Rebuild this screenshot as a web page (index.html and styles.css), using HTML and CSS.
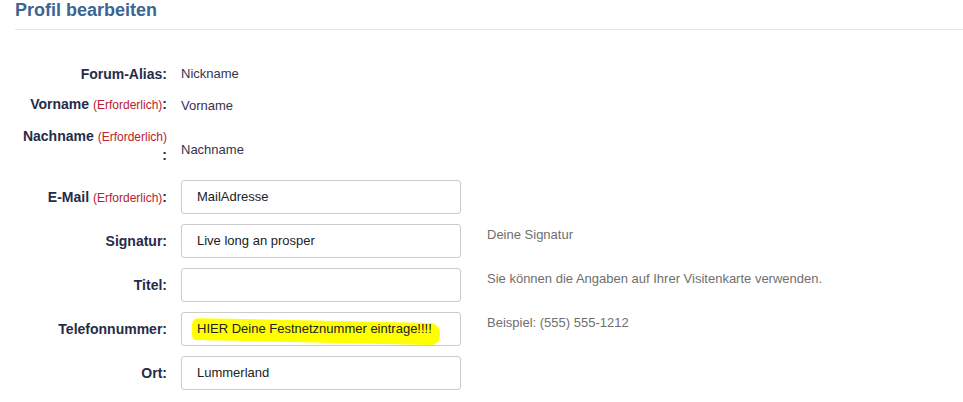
FILE: index.html
```html
<!DOCTYPE html>
<html lang="de">
<head>
<meta charset="utf-8">
<title>Profil bearbeiten</title>
<link rel="stylesheet" href="styles.css">
</head>
<body>
<div class="page">
  <h2 class="title">Profil bearbeiten</h2>
  <div class="rule"></div>
  <div class="form">
    <div class="row static r1">
      <div class="label">Forum-Alias:</div>
      <div class="value">Nickname</div>
    </div>
    <div class="row static r2">
      <div class="label">Vorname <span class="req">(Erforderlich)</span>:</div>
      <div class="value v2">Vorname</div>
    </div>
    <div class="row static r3">
      <div class="label">Nachname <span class="req">(Erforderlich)</span><br>:</div>
      <div class="value v3">Nachname</div>
    </div>
    <div class="row field">
      <div class="label">E-Mail <span class="req">(Erforderlich)</span>:</div>
      <div class="input">MailAdresse</div>
    </div>
    <div class="row field">
      <div class="label">Signatur:</div>
      <div class="input">Live long an prosper</div>
      <div class="help">Deine Signatur</div>
    </div>
    <div class="row field">
      <div class="label">Titel:</div>
      <div class="input"></div>
      <div class="help">Sie können die Angaben auf Ihrer Visitenkarte verwenden.</div>
    </div>
    <div class="row field">
      <div class="label">Telefonnummer:</div>
      <div class="input"><span class="marked">HIER Deine Festnetznummer eintrage!!!!</span></div>
      <div class="help">Beispiel: (555) 555-1212</div>
    </div>
    <div class="row field">
      <div class="label">Ort:</div>
      <div class="input">Lummerland</div>
    </div>
  </div>
</div>
</body>
</html>
```

FILE: styles.css
```css
html, body {
  margin: 0;
  padding: 0;
  background: #ffffff;
}

body {
  font-family: "Liberation Sans", Arial, sans-serif;
  font-size: 13px;
  color: #333333;
}

.page {
  padding-left: 15px;
}

.title {
  margin: 0;
  font-size: 18px;
  line-height: 20px;
  font-weight: bold;
  color: #3c6591;
}

.rule {
  margin-top: 9px;
  height: 1px;
  background: #e5e5e5;
}

.form {
  padding-top: 35px;
  margin-left: -15px;
}

.row {
  display: flex;
}

.row.static {
  align-items: flex-start;
  margin-bottom: 12px;
}

.row.r3 {
  margin-bottom: 16px;
}

.row.field {
  align-items: center;
  margin-bottom: 10px;
}

.label {
  width: 167px;
  flex: none;
  text-align: right;
  font-weight: bold;
  font-size: 14px;
  line-height: 18px;
  color: #262c48;
}

.req {
  font-weight: normal;
  font-size: 12px;
  color: #b8202f;
}

.value {
  margin-left: 14px;
  line-height: 18px;
  color: #33344f;
}

.v2 {
  padding-top: 2px;
}

.v3 {
  padding-top: 14px;
}

.input {
  margin-left: 14px;
  flex: none;
  height: 32px;
  border: 1px solid #cccccc;
  border-radius: 3px;
  padding-left: 15px;
  box-sizing: content-box;
  width: 263px;
  line-height: 32px;
  color: #222222;
  white-space: nowrap;
}

.help {
  margin-left: 26px;
  color: #6f6f6f;
  align-self: flex-start;
  padding-top: 3px;
}

.marked {
  position: relative;
  z-index: 0;
}

.marked::before {
  content: "";
  position: absolute;
  z-index: -1;
  left: -5px;
  right: -8px;
  top: -3px;
  bottom: -4px;
  background: #ffff00;
  border-radius: 6px 10px 9px 5px;
  transform: rotate(1.2deg);
  transform-origin: left center;
}
```
